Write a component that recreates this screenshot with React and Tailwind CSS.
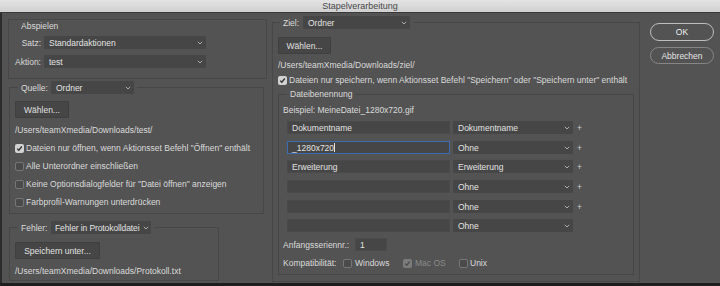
import React from "react";

const Chevron = () => (
  <svg width="6" height="4" viewBox="0 0 6 4" className="shrink-0">
    <path d="M0.8 0.8 L3 3 L5.2 0.8" fill="none" stroke="#b8b8b8" strokeWidth="0.9" />
  </svg>
);

function Select({ value, className = "" }) {
  return (
    <div className={`flex items-center justify-between h-[13px] bg-[#464646] pl-[5px] pr-[3px] rounded-[1px] text-[#e2e2e2] ${className}`}>
      <span className="whitespace-nowrap leading-[10px]">{value}</span>
      <Chevron />
    </div>
  );
}

function Check({ checked, disabled }) {
  if (checked)
    return (
      <span className={`w-[9px] h-[9px] rounded-[2px] flex items-center justify-center shrink-0 ${disabled ? "bg-[#7b7b7b]" : "bg-[#d2d2d2]"}`}>
        <svg width="7" height="7" viewBox="0 0 7 7">
          <path d="M1.2 3.6 L2.8 5.2 L5.8 1.5" fill="none" stroke={disabled ? "#4f4f4f" : "#2e2e2e"} strokeWidth="1.3" />
        </svg>
      </span>
    );
  return <span className="w-[9px] h-[9px] rounded-[2px] border border-[#767676] bg-[#4a4a4a] shrink-0" />;
}

function Button({ children, className = "" }) {
  return (
    <div className={`h-[17px] flex items-center justify-center bg-[#464646] border border-[#3f3f3f] rounded-[1px] text-[#e0e0e0] leading-[10px] ${className}`}>
      {children}
    </div>
  );
}

function CheckRow({ checked, children }) {
  return (
    <div className="h-[18px] flex items-center gap-[2px]">
      <Check checked={checked} />
      <span className="leading-[10px]">{children}</span>
    </div>
  );
}

const rows = [
  { t: "Dokumentname", s: "Dokumentname", mt: "mt-[6px]", plus: true },
  { t: "_1280x720", s: "Ohne", mt: "mt-[7px]", plus: true, active: true },
  { t: "Erweiterung", s: "Erweiterung", mt: "mt-[6px]", plus: true },
  { t: "", s: "Ohne", mt: "mt-[7px]", plus: true },
  { t: "", s: "Ohne", mt: "mt-[7px]", plus: true },
  { t: "", s: "Ohne", mt: "mt-[6px]", plus: false },
];

export default function App() {
  return (
    <div className="w-[720px] h-[286px] bg-[#535353] overflow-hidden flex flex-col text-[8.5px] text-[#dadada] font-['Liberation_Sans','Arial',sans-serif]">
      <div className="h-[13px] shrink-0 bg-gradient-to-b from-[#e4e4e4] to-[#d0d0d0] border-b border-[#3a3a3a] flex items-center justify-center text-[9px] text-[#4a4a4a] leading-[12px]">
        Stapelverarbeitung
      </div>
      <div className="h-[270px] flex border-l-2 border-[#2c2c2c]">
        {/* Left column */}
        <div className="w-[265px] pl-[6px] flex flex-col shrink-0">
          <div className="mt-[6px] w-[259px] h-[60px] border border-[#474747] flex flex-col">
            <div className="pl-[12px] pt-[1px] leading-[10px]">Abspielen</div>
            <div className="flex items-center mt-[5px]">
              <span className="w-[32px] text-right leading-[10px]">Satz:</span>
              <Select value="Standardaktionen" className="ml-[3px] w-[162px]" />
            </div>
            <div className="flex items-center mt-[6px]">
              <span className="w-[32px] text-right leading-[10px]">Aktion:</span>
              <Select value="test" className="ml-[3px] w-[162px]" />
            </div>
          </div>

          <fieldset className="mt-[2px] ml-[1px] w-[255px] h-[133px] border border-[#474747] px-[5px] min-w-0">
            <legend className="ml-[3px] px-[3px]">
              <div className="flex items-center">
                <span className="w-[30px] leading-[10px]">Quelle:</span>
                <Select value="Ordner" className="w-[83px]" />
              </div>
            </legend>
            <Button className="mt-[7px] w-[54px]">Wählen...</Button>
            <div className="mt-[7px] leading-[10px]">/Users/teamXmedia/Downloads/test/</div>
            <div className="mt-[4px]">
              <CheckRow checked>Dateien nur öffnen, wenn Aktionsset Befehl "Öffnen" enthält</CheckRow>
              <CheckRow>Alle Unterordner einschließen</CheckRow>
              <CheckRow>Keine Optionsdialogfelder für "Datei öffnen" anzeigen</CheckRow>
              <CheckRow>Farbprofil-Warnungen unterdrücken</CheckRow>
            </div>
          </fieldset>

          <fieldset className="mt-[7px] ml-[1px] w-[210px] h-[60px] border border-[#474747] px-[5px] min-w-0">
            <legend className="ml-[3px] px-[3px]">
              <div className="flex items-center">
                <span className="w-[30px] leading-[10px]">Fehler:</span>
                <div className="flex items-center justify-between h-[13px] w-[100px] bg-[#464646] pl-[4px] pr-[2px] rounded-[1px] text-[#e2e2e2]">
                  <span className="whitespace-nowrap leading-[10px] tracking-[-0.1px]">Fehler in Protokolldatei</span>
                  <Chevron />
                </div>
              </div>
            </legend>
            <Button className="mt-[8px] w-[85px]">Speichern unter...</Button>
            <div className="mt-[7px] leading-[10px]">/Users/teamXmedia/Downloads/Protokoll.txt</div>
          </fieldset>
        </div>

        {/* Right column */}
        <fieldset className="ml-[5px] mt-[3px] w-[368px] h-[266px] border border-[#474747] px-[5px] self-start shrink-0 min-w-0">
          <legend className="ml-[2px] px-[3px]">
            <div className="flex items-center">
              <span className="w-[20px] leading-[10px]">Ziel:</span>
              <Select value="Ordner" className="w-[107px]" />
            </div>
          </legend>
          <Button className="mt-[8px] w-[53px]">Wählen...</Button>
          <div className="mt-[6px] leading-[10px]">/Users/teamXmedia/Downloads/ziel/</div>
          <div className="mt-[4px] h-[12px] flex items-center gap-[2px]">
            <Check checked />
            <span className="leading-[10px]">Dateien nur speichern, wenn Aktionsset Befehl "Speichern" oder "Speichern unter" enthält</span>
          </div>
          <fieldset className="mt-[3px] w-full h-[186px] border border-[#474747] px-[4px] min-w-0">
            <legend className="ml-[4px] px-[3px] leading-[10px]">Dateibenennung</legend>
            <div className="mt-[6px] leading-[10px]">Beispiel: MeineDatei_1280x720.gif</div>
            {rows.map((r, i) => (
              <div key={i} className={`flex items-center ml-[4px] ${r.mt}`}>
                <div className={`w-[163px] h-[13px] flex items-center pl-[4px] bg-[#464646] border ${r.active ? "border-[#3d6db0]" : "border-[#4a4a4a]"} leading-[10px] text-[#e2e2e2]`}>
                  {r.t}
                  {r.active && <span className="w-[1px] h-[9px] bg-[#e0e0e0]" />}
                </div>
                <Select value={r.s} className="ml-[3px] w-[120px]" />
                {r.plus && <span className="ml-[4px] text-[#cfcfcf] leading-[10px]">+</span>}
              </div>
            ))}
            <div className="mt-[6px] flex items-center">
              <span className="w-[72px] leading-[10px]">Anfangsseriennr.:</span>
              <div className="w-[32px] h-[13px] bg-[#464646] border border-[#4a4a4a] flex items-center pl-[4px] leading-[10px] text-[#e2e2e2]">1</div>
            </div>
            <div className="mt-[6px] h-[12px] flex items-center">
              <span className="w-[60px] leading-[10px]">Kompatibilität:</span>
              <div className="w-[60px] flex items-center gap-[3px]">
                <Check />
                <span className="leading-[10px]">Windows</span>
              </div>
              <div className="w-[56px] flex items-center gap-[3px]">
                <Check checked disabled />
                <span className="leading-[10px] text-[#8a8a8a]">Mac OS</span>
              </div>
              <div className="flex items-center gap-[2px]">
                <Check />
                <span className="leading-[10px]">Unix</span>
              </div>
            </div>
          </fieldset>
        </fieldset>

        {/* Buttons */}
        <div className="ml-[10px] mt-[10px] w-[64px] flex flex-col shrink-0">
          <div className="h-[18px] rounded-full border border-[#bdbdbd] flex items-center justify-center text-[#f2f2f2] leading-[10px]">OK</div>
          <div className="mt-[6px] h-[17px] rounded-full border border-[#868686] flex items-center justify-center text-[#e4e4e4] leading-[10px]">Abbrechen</div>
        </div>
      </div>
      <div className="h-[3px] bg-[#1e1e1e]" />
    </div>
  );
}
